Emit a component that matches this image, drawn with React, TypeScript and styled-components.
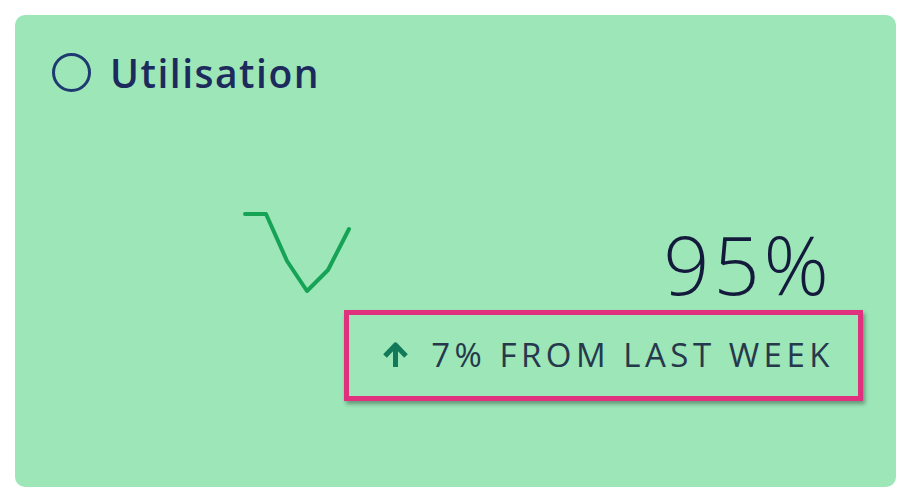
import React, {FC} from 'react';
import styled, {createGlobalStyle} from "styled-components";

const GlobalStyle = createGlobalStyle`
  html, body {
    margin: 0;
    background: #ffffff;
  }
  body {
    padding: 15px;
    font-family: "Open Sans", "Liberation Sans", sans-serif;
  }
`

const Card = styled.div`
  width: 881px;
  height: 472px;
  box-sizing: border-box;
  padding: 37px 33px 0 37px;
  background-color: #9ce6b8;
  border-radius: 10px;
  display: flex;
  flex-direction: column;
`
const Header = styled.div`
  display: flex;
  align-items: center;
  height: 40px;
`
const Ring = styled.span`
  width: 39px;
  height: 39px;
  box-sizing: border-box;
  border: 3.5px solid #1f3a70;
  border-radius: 50%;
  margin-right: 19px;
`
const Title = styled.div`
  font-size: 39px;
  font-weight: 600;
  letter-spacing: 1.5px;
  color: #1c2a5c;
`
const Body = styled.div`
  display: flex;
  align-items: flex-start;
  padding-left: 188px;
  margin-top: 113px;
`
const Spark = styled.svg`
  flex: none;
  overflow: visible;
`
const Stats = styled.div`
  flex: none;
  margin-left: auto;
  margin-top: 18px;
  display: flex;
  flex-direction: column;
  align-items: flex-end;
`
const Value = styled.div`
  font-size: 81px;
  line-height: 81px;
  font-weight: 300;
  letter-spacing: 4px;
  color: #141a3c;
  padding-right: 30px;
`
const Change = styled.div`
  margin-top: 6px;
  display: flex;
  align-items: center;
  gap: 22px;
  padding: 23px 24px 25px 33px;
  border: 5px solid #e0317f;
  box-shadow: 2px 3px 4px rgba(0, 0, 0, 0.35);
  white-space: nowrap;

  svg {
    flex: none;
  }
`
const ChangeText = styled.span`
  font-size: 33px;
  line-height: 33px;
  letter-spacing: 4.5px;
  color: #26394c;
`

interface TrendProps {
    points: [number, number][]
}

const Trend: FC<TrendProps> = ({points}) => (
    <Spark width="100" height="90" viewBox="0 0 100 90">
        <polyline
            points={points.map(p => p.join(',')).join(' ')}
            fill="none"
            stroke="#17a356"
            strokeWidth="4"
            strokeLinejoin="round"
            strokeLinecap="round"
        />
    </Spark>
)

const ArrowUp = () => (
    <svg width="27" height="27" viewBox="0 0 27 27">
        <path d="M3 15 L13.5 4 L24 15" fill="none" stroke="#127a5a" strokeWidth="5" strokeLinejoin="round"/>
        <path d="M13.5 6 V26" fill="none" stroke="#127a5a" strokeWidth="5"/>
    </svg>
)

const App: FC = () => {
    return (
        <>
            <GlobalStyle/>
            <Card>
                <Header>
                    <Ring/>
                    <Title>Utilisation</Title>
                </Header>
                <Body>
                    <Trend points={[[5, 9], [26, 9], [47, 56], [67, 86], [88, 65], [109, 24]]}/>
                    <Stats>
                        <Value>95%</Value>
                        <Change>
                            <ArrowUp/>
                            <ChangeText>7% FROM LAST WEEK</ChangeText>
                        </Change>
                    </Stats>
                </Body>
            </Card>
        </>
    );
};

export default App;
